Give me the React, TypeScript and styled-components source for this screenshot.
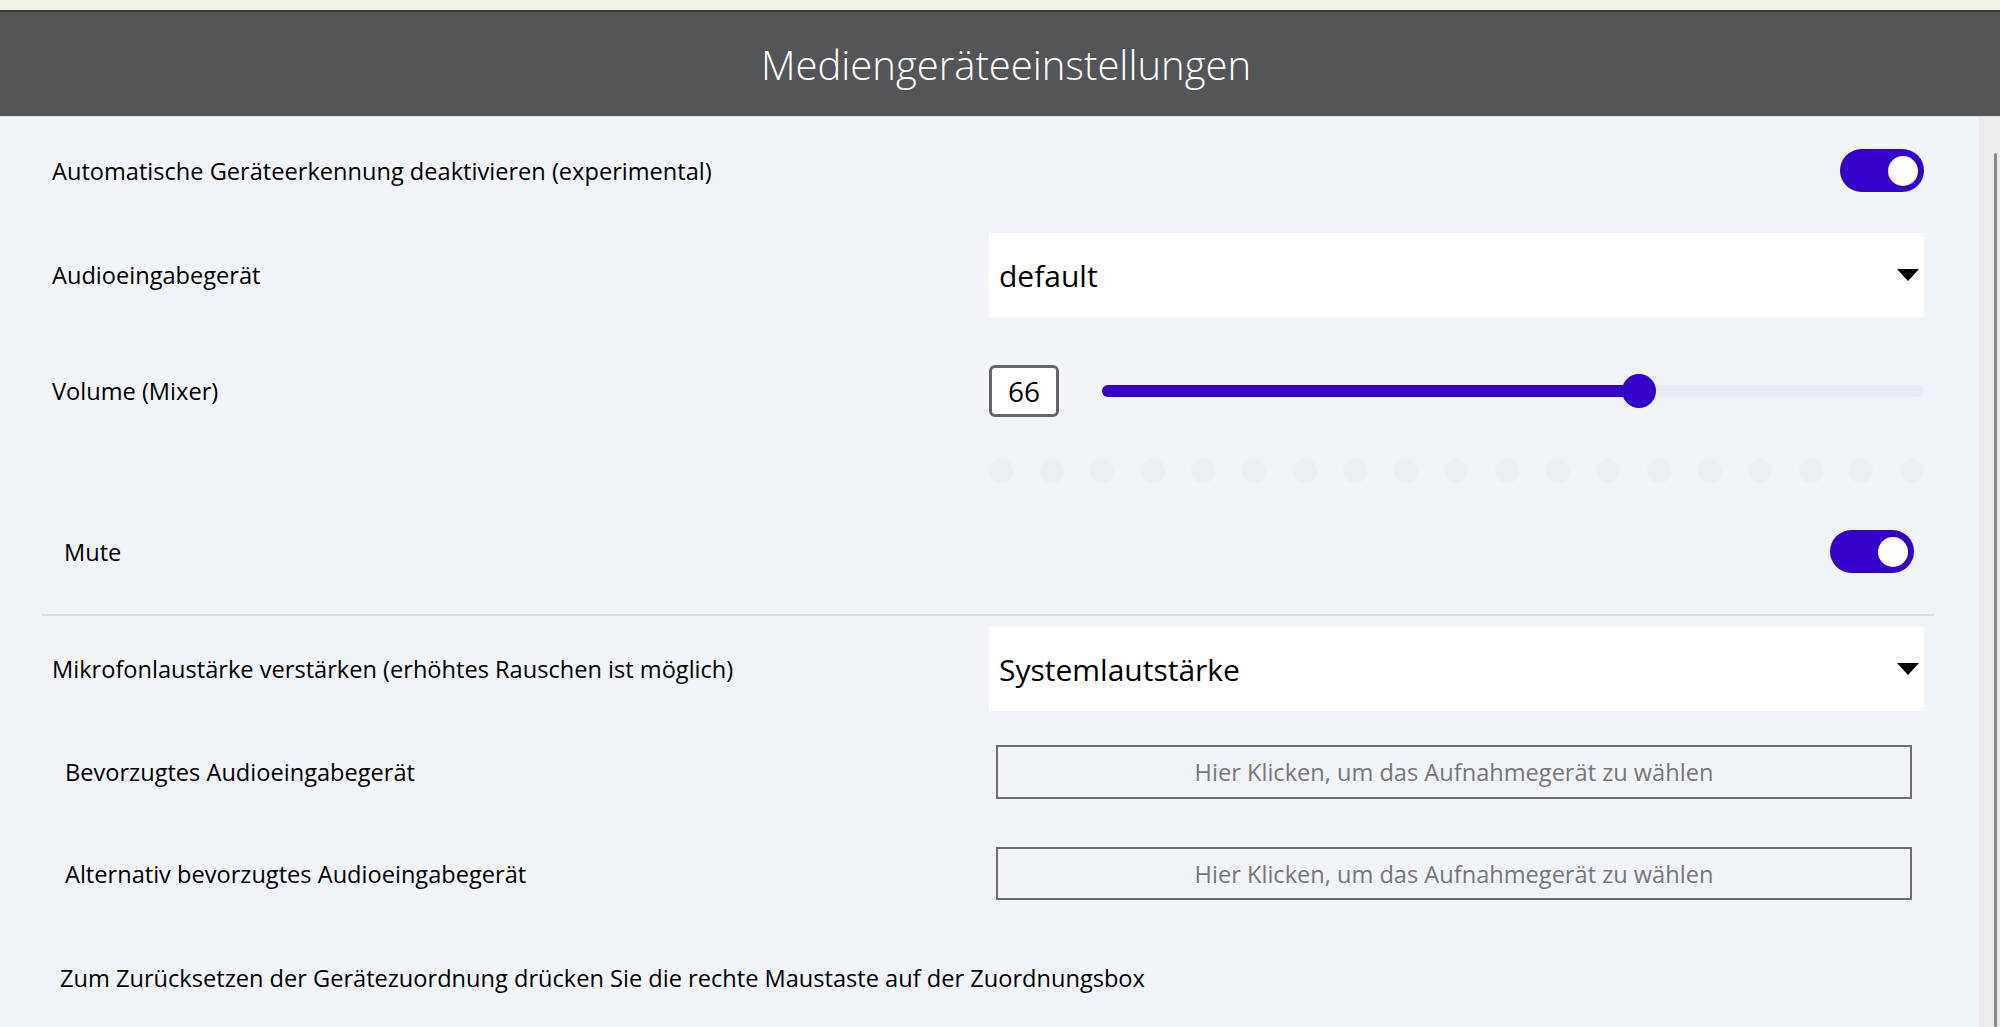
import styled, { createGlobalStyle } from "styled-components";

const GlobalStyle = createGlobalStyle`
  html, body {
    margin: 0;
    padding: 0;
    height: 100%;
  }
  body {
    background: #f1f4f8;
    font-family: "Open Sans", "Noto Sans", sans-serif;
    color: #000;
    overflow: hidden;
  }
  #root {
    height: 100%;
  }
`;

const Page = styled.div`
  display: flex;
  flex-direction: column;
  height: 100vh;
`;

const TopStrip = styled.div`
  height: 10px;
  flex-shrink: 0;
  background: #f3f5e4;
`;

const Header = styled.header`
  height: 104px;
  flex-shrink: 0;
  padding-left: 12px;
  border-top: 2px solid #3a3b3c;
  border-bottom: 1px solid #dfe2e6;
  background: #545557;
  display: flex;
  align-items: center;
  justify-content: center;
  color: #fff;
  font-size: 40px;
  font-weight: 300;
`;

const Body = styled.div`
  flex: 1;
  min-height: 0;
  display: flex;
`;

const Content = styled.main`
  flex: 1;
  padding: 32px 55px 0 52px;
  display: flex;
  flex-direction: column;
`;

const ScrollTrack = styled.div`
  width: 21px;
  flex-shrink: 0;
  box-sizing: border-box;
  padding: 36px 3px 0 0;
  background: #ececec;
  display: flex;
  justify-content: flex-end;
`;

const ScrollThumb = styled.div`
  width: 3px;
  border-radius: 2px;
  background: #8a8a8a;
`;

const Row = styled.div<{ $top?: number }>`
  display: grid;
  grid-template-columns: 1fr 935px;
  align-items: center;
  margin-top: ${(p) => p.$top ?? 0}px;
`;

const MuteRow = styled(Row)`
  padding: 0 10px 0 12px;
`;

const DeviceRow = styled(Row)`
  grid-template-columns: 1fr 916px;
  padding: 0 12px 0 13px;
`;

const Label = styled.span`
  font-size: 23.6px;
  line-height: 32px;
  color: #000;
`;

const Toggle = styled.div<{ $on?: boolean }>`
  justify-self: end;
  width: 84px;
  height: 43px;
  box-sizing: border-box;
  padding: 0 6px;
  border-radius: 22px;
  background: ${(p) => (p.$on ? "#3300cc" : "#c8ccd4")};
  display: flex;
  align-items: center;
  justify-content: ${(p) => (p.$on ? "flex-end" : "flex-start")};
`;

const Knob = styled.div`
  width: 30px;
  height: 30px;
  border-radius: 50%;
  background: #fff;
`;

const Select = styled.div`
  height: 84px;
  box-sizing: border-box;
  padding: 0 5px 0 10px;
  background: #fff;
  display: flex;
  align-items: center;
  justify-content: space-between;
  font-size: 30px;
  color: #000;
`;

const SliderBox = styled.div`
  display: flex;
  align-items: center;
  gap: 43px;
`;

const NumberBox = styled.div`
  width: 70px;
  height: 52px;
  box-sizing: border-box;
  border: 3px solid #666;
  border-radius: 6px;
  background: #fff;
  display: flex;
  align-items: center;
  justify-content: center;
  font-size: 28px;
`;

const Track = styled.div`
  position: relative;
  flex: 1;
  height: 12px;
  border-radius: 6px;
  background: #e9edf3;
`;

const Fill = styled.div`
  height: 100%;
  border-radius: 6px;
  background: #3300cc;
`;

const Thumb = styled.div`
  position: absolute;
  top: 50%;
  width: 34px;
  height: 34px;
  margin-left: -17px;
  transform: translateY(-50%);
  border-radius: 50%;
  background: #3300cc;
`;

const Ticks = styled.div`
  grid-column: 2;
  display: flex;
  justify-content: space-between;
`;

const Tick = styled.div`
  width: 24px;
  height: 24px;
  border-radius: 50%;
  background: #eceff4;
`;

const Divider = styled.hr`
  margin: 41px -10px 0;
  height: 2px;
  border: 0;
  background: #dcdde0;
`;

const PickButton = styled.button`
  height: 54px;
  box-sizing: border-box;
  border: 2px solid #6f6f6f;
  background: transparent;
  font-family: inherit;
  font-size: 23.6px;
  color: #777;
  cursor: pointer;
`;

const Hint = styled.p`
  margin: 62px 0 0 8px;
  font-size: 23.6px;
  line-height: 32px;
`;

function Arrow() {
  return (
    <svg width="22" height="12" viewBox="0 0 22 12">
      <polygon points="0,0 22,0 11,12" fill="#000" />
    </svg>
  );
}

export default function App() {
  const volume = 66;
  const thumbPos = `calc(17px + ${volume / 100} * (100% - 34px))`;

  return (
    <Page>
      <GlobalStyle />
      <TopStrip />
      <Header>Mediengeräteeinstellungen</Header>
      <Body>
        <Content>
          <Row>
            <Label>Automatische Geräteerkennung deaktivieren (experimental)</Label>
            <Toggle $on>
              <Knob />
            </Toggle>
          </Row>

          <Row $top={41}>
            <Label>Audioeingabegerät</Label>
            <Select>
              <span>default</span>
              <Arrow />
            </Select>
          </Row>

          <Row $top={48}>
            <Label>Volume (Mixer)</Label>
            <SliderBox>
              <NumberBox>{volume}</NumberBox>
              <Track>
                <Fill style={{ width: thumbPos }} />
                <Thumb style={{ left: thumbPos }} />
              </Track>
            </SliderBox>
          </Row>

          <Row $top={42}>
            <Ticks>
              {Array.from({ length: 19 }, (_, i) => (
                <Tick key={i} />
              ))}
            </Ticks>
          </Row>

          <MuteRow $top={47}>
            <Label>Mute</Label>
            <Toggle $on>
              <Knob />
            </Toggle>
          </MuteRow>

          <Divider />

          <Row $top={11}>
            <Label>Mikrofonlaustärke verstärken (erhöhtes Rauschen ist möglich)</Label>
            <Select>
              <span>Systemlautstärke</span>
              <Arrow />
            </Select>
          </Row>

          <DeviceRow $top={34}>
            <Label>Bevorzugtes Audioeingabegerät</Label>
            <PickButton>Hier Klicken, um das Aufnahmegerät zu wählen</PickButton>
          </DeviceRow>

          <DeviceRow $top={48}>
            <Label>Alternativ bevorzugtes Audioeingabegerät</Label>
            <PickButton style={{ height: 53 }}>
              Hier Klicken, um das Aufnahmegerät zu wählen
            </PickButton>
          </DeviceRow>

          <Hint>
            Zum Zurücksetzen der Gerätezuordnung drücken Sie die rechte Maustaste auf der
            Zuordnungsbox
          </Hint>
        </Content>
        <ScrollTrack>
          <ScrollThumb />
        </ScrollTrack>
      </Body>
    </Page>
  );
}
